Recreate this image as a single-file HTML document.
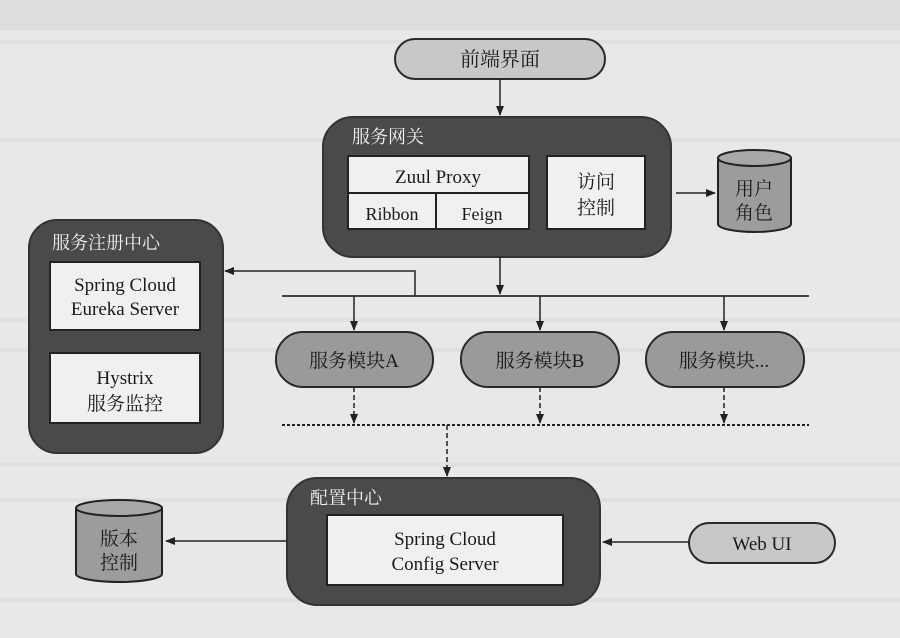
<!DOCTYPE html>
<html><head><meta charset="utf-8"><style>
html,body{margin:0;padding:0;background:#e9e9e9;}
svg{display:block}
text{font-family:"Liberation Serif","Noto Serif CJK SC",serif;fill:#1a1a1a;}
.w{fill:#f2f2f2}
</style></head><body>
<svg width="900" height="638" viewBox="0 0 900 638" xmlns="http://www.w3.org/2000/svg">
<defs><marker id="a" markerWidth="10" markerHeight="8" refX="9" refY="4" orient="auto" markerUnits="userSpaceOnUse"><path d="M0,0 L10,4 L0,8 Z" fill="#222"/></marker></defs>
<rect width="900" height="638" fill="#e8e8e8"/>
<rect width="900" height="30" fill="#dedede"/>
<g stroke="#dcdcdc" stroke-width="4" opacity="0.6">
<line x1="0" y1="42" x2="900" y2="42"/><line x1="0" y1="140" x2="900" y2="140"/><line x1="0" y1="320" x2="900" y2="320"/><line x1="0" y1="350" x2="900" y2="350"/><line x1="0" y1="465" x2="900" y2="465"/><line x1="0" y1="500" x2="900" y2="500"/><line x1="0" y1="600" x2="900" y2="600"/>
</g>
<rect x="395" y="39" width="210" height="40" rx="20" fill="#c8c8c8" stroke="#2a2a2a" stroke-width="2"/>
<text x="500" y="66" font-size="20" text-anchor="middle">前端界面</text>
<line x1="500" y1="79" x2="500" y2="115" stroke="#222" stroke-width="1.5" marker-end="url(#a)"/>
<rect x="323" y="117" width="348" height="140" rx="30" fill="#4a4a4a" stroke="#333" stroke-width="2"/>
<text x="352" y="143" font-size="18" class="w">服务网关</text>
<rect x="348" y="156" width="181" height="73" fill="#f0f0f0" stroke="#222" stroke-width="2"/>
<line x1="348" y1="193" x2="529" y2="193" stroke="#222" stroke-width="2"/>
<line x1="436" y1="193" x2="436" y2="229" stroke="#222" stroke-width="2"/>
<text x="438" y="183" font-size="19" text-anchor="middle">Zuul Proxy</text>
<text x="392" y="220" font-size="18" text-anchor="middle">Ribbon</text>
<text x="482" y="220" font-size="18" text-anchor="middle">Feign</text>
<rect x="547" y="156" width="98" height="73" fill="#f0f0f0" stroke="#222" stroke-width="2"/>
<text x="596" y="188" font-size="19" text-anchor="middle">访问</text>
<text x="596" y="214" font-size="19" text-anchor="middle">控制</text>
<line x1="676" y1="193" x2="715" y2="193" stroke="#222" stroke-width="1.5" marker-end="url(#a)"/>
<path d="M718,158 L718,224 A36.5,8 0 0 0 791,224 L791,158" fill="#9c9c9c" stroke="#222" stroke-width="2"/>
<ellipse cx="754.5" cy="158" rx="36.5" ry="8" fill="#a8a8a8" stroke="#222" stroke-width="2"/>
<text x="754" y="195" font-size="19" text-anchor="middle">用户</text>
<text x="754" y="219" font-size="19" text-anchor="middle">角色</text>
<rect x="29" y="220" width="194" height="233" rx="28" fill="#4a4a4a" stroke="#333" stroke-width="2"/>
<text x="52" y="249" font-size="18" class="w">服务注册中心</text>
<rect x="50" y="262" width="150" height="68" fill="#f0f0f0" stroke="#222" stroke-width="2"/>
<text x="125" y="291" font-size="19" text-anchor="middle">Spring Cloud</text>
<text x="125" y="315" font-size="19" text-anchor="middle">Eureka Server</text>
<rect x="50" y="353" width="150" height="70" fill="#f0f0f0" stroke="#222" stroke-width="2"/>
<text x="125" y="384" font-size="19" text-anchor="middle">Hystrix</text>
<text x="125" y="410" font-size="19" text-anchor="middle">服务监控</text>
<line x1="500" y1="257" x2="500" y2="294" stroke="#222" stroke-width="1.5" marker-end="url(#a)"/>
<line x1="282" y1="296" x2="809" y2="296" stroke="#444" stroke-width="2"/>
<polyline points="415,296 415,271 225,271" fill="none" stroke="#222" stroke-width="1.5" marker-end="url(#a)"/>
<line x1="354" y1="296" x2="354" y2="330" stroke="#222" stroke-width="1.5" marker-end="url(#a)"/>
<line x1="540" y1="296" x2="540" y2="330" stroke="#222" stroke-width="1.5" marker-end="url(#a)"/>
<line x1="724" y1="296" x2="724" y2="330" stroke="#222" stroke-width="1.5" marker-end="url(#a)"/>
<rect x="276" y="332" width="157" height="55" rx="27" fill="#9a9a9a" stroke="#2a2a2a" stroke-width="2"/>
<text x="354" y="367" font-size="19" text-anchor="middle">服务模块A</text>
<rect x="461" y="332" width="158" height="55" rx="27" fill="#9a9a9a" stroke="#2a2a2a" stroke-width="2"/>
<text x="540" y="367" font-size="19" text-anchor="middle">服务模块B</text>
<rect x="646" y="332" width="158" height="55" rx="27" fill="#9a9a9a" stroke="#2a2a2a" stroke-width="2"/>
<text x="724" y="367" font-size="19" text-anchor="middle">服务模块...</text>
<g stroke="#222" stroke-width="1.5" stroke-dasharray="5,3">
<line x1="354" y1="387" x2="354" y2="423" marker-end="url(#a)"/>
<line x1="540" y1="387" x2="540" y2="423" marker-end="url(#a)"/>
<line x1="724" y1="387" x2="724" y2="423" marker-end="url(#a)"/>
<line x1="282" y1="425" x2="809" y2="425" stroke-dasharray="3,2" stroke-width="2"/>
<line x1="447" y1="425" x2="447" y2="476" marker-end="url(#a)"/>
</g>
<rect x="287" y="478" width="313" height="127" rx="30" fill="#4a4a4a" stroke="#333" stroke-width="2"/>
<text x="310" y="504" font-size="18" class="w">配置中心</text>
<rect x="327" y="515" width="236" height="70" fill="#f0f0f0" stroke="#222" stroke-width="2"/>
<text x="445" y="545" font-size="19" text-anchor="middle">Spring Cloud</text>
<text x="445" y="570" font-size="19" text-anchor="middle">Config Server</text>
<line x1="287" y1="541" x2="166" y2="541" stroke="#222" stroke-width="1.5" marker-end="url(#a)"/>
<path d="M76,508 L76,574 A43,8 0 0 0 162,574 L162,508" fill="#9c9c9c" stroke="#222" stroke-width="2"/>
<ellipse cx="119" cy="508" rx="43" ry="8" fill="#a8a8a8" stroke="#222" stroke-width="2"/>
<text x="119" y="545" font-size="19" text-anchor="middle">版本</text>
<text x="119" y="569" font-size="19" text-anchor="middle">控制</text>
<rect x="689" y="523" width="146" height="40" rx="20" fill="#c8c8c8" stroke="#2a2a2a" stroke-width="2"/>
<text x="762" y="550" font-size="19" text-anchor="middle">Web UI</text>
<line x1="689" y1="542" x2="603" y2="542" stroke="#222" stroke-width="1.5" marker-end="url(#a)"/>
</svg>
</body></html>
